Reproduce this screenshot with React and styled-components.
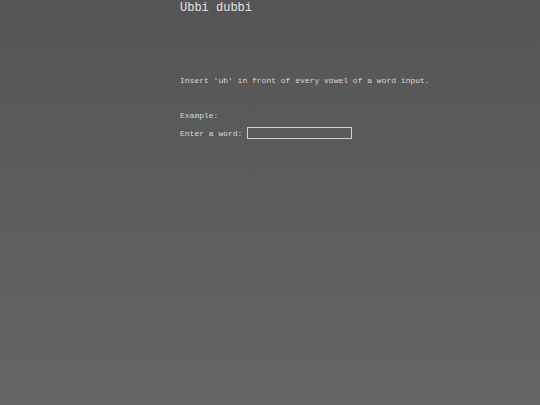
import React, { useState } from "react";
import styled, { createGlobalStyle } from "styled-components";

const GlobalStyle = createGlobalStyle`
  html, body {
    margin: 0;
    padding: 0;
    height: 100%;
  }
  body {
    background: linear-gradient(to bottom, #555555, #656565);
    font-family: "Liberation Mono", "Courier New", monospace;
    color: #d8d8d8;
  }
  #root {
    min-height: 100%;
  }
`;

const Page = styled.div`
  min-height: 405px;
  padding: 1px 0 0 180px;
  box-sizing: border-box;
`;

const Title = styled.h1`
  margin: 0;
  font-size: 12px;
  font-weight: normal;
  line-height: 14px;
  color: #e2e2e2;
`;

const Text = styled.p`
  margin: 0;
  font-size: 8px;
  line-height: 10px;
  margin-top: ${(p) => p.$top || 0}px;
`;

const Row = styled.label`
  display: flex;
  align-items: center;
  gap: 5px;
  margin-top: 6px;
  font-size: 8px;
`;

const Input = styled.input`
  width: 105px;
  height: 12px;
  box-sizing: border-box;
  background: transparent;
  border: 1px solid #d0d0d0;
  padding: 0 2px;
  font-family: inherit;
  font-size: 8px;
  color: #e2e2e2;
  outline: none;
`;

const ubbify = (w) => w.replace(/([aeiou])/gi, "ub$1");

export default function App() {
  const [word, setWord] = useState("");
  return (
    <>
      <GlobalStyle />
      <Page>
        <Title>Ubbi dubbi</Title>
        <Text $top={61}>Insert 'ub' in front of every vowel of a word input.</Text>
        <Text $top={25}>Example:{word ? " " + ubbify(word) : ""}</Text>
        <Row>
          Enter a word:
          <Input value={word} onChange={(e) => setWord(e.target.value)} />
        </Row>
      </Page>
    </>
  );
}
